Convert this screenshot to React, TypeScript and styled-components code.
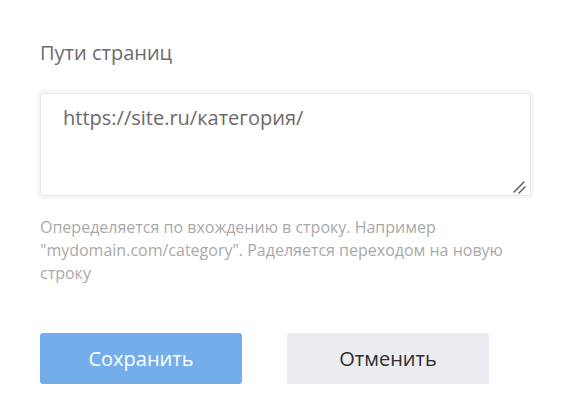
import React, { useEffect, useRef, useState } from "react";
import styled, { createGlobalStyle } from "styled-components";

const GlobalStyle = createGlobalStyle`
    body {
        margin: 0;
        background: #fff;
        font-family: "Open Sans", "Noto Sans", sans-serif;
    }
`;

const StyledForm = styled.div`
    width: 572px;
    height: 410px;
    box-sizing: border-box;
    padding: 40px 41px 0 40px;
    display: flex;
    flex-direction: column;
`;

const Label = styled.div`
    font-size: 20px;
    line-height: 26px;
    color: #6c6c6c;
    margin-bottom: 27px;
`;

const FieldWrap = styled.div`
    position: relative;
    width: 491px;
    & > svg {
        position: absolute;
        right: 5px;
        bottom: 2px;
        pointer-events: none;
    }
`;

const Field = styled.textarea`
    display: block;
    width: 491px;
    height: 103px;
    box-sizing: border-box;
    padding: 11px 22px;
    border: 1px solid #e6e7ea;
    border-radius: 3px;
    box-shadow: 0 0 0 3px #f6f7f9;
    font-family: "Open Sans", "Noto Sans", sans-serif;
    font-size: 20px;
    line-height: 26px;
    color: #6a6a6a;
    caret-color: #444;
    outline: none;
    resize: none;
`;

const Hint = styled.p`
    margin: 20px 0 0;
    width: 480px;
    font-size: 16px;
    line-height: 23px;
    color: #a9a9a9;
`;

const Actions = styled.div`
    display: flex;
    gap: 45px;
    margin-top: 48px;
`;

const Button = styled.button<{ $primary?: boolean }>`
    width: 202px;
    height: 51px;
    border: 0;
    border-radius: 3px;
    font-family: "Open Sans", "Noto Sans", sans-serif;
    font-size: 20px;
    cursor: pointer;
    background: ${(p) => (p.$primary ? "#73aeea" : "#ebecf0")};
    color: ${(p) => (p.$primary ? "#fff" : "#2e2e2e")};
`;

const App = () => {
    const [value, setValue] = useState("https://site.ru/категория/");
    const fieldRef = useRef<HTMLTextAreaElement>(null);

    useEffect(() => {
        const el = fieldRef.current;
        if (el) {
            el.focus();
            el.setSelectionRange(el.value.length, el.value.length);
        }
    }, []);

    return (
        <>
            <GlobalStyle />
            <StyledForm>
                <Label>Пути страниц</Label>
                <FieldWrap>
                    <Field
                        ref={fieldRef}
                        value={value}
                        onChange={(e) => setValue(e.target.value)}
                    />
                    <svg width="14" height="14" viewBox="0 0 14 14">
                        <path
                            d="M2 12 L12 2 M7 13 L13 7"
                            stroke="#555"
                            strokeWidth="1.4"
                            strokeLinecap="round"
                        />
                    </svg>
                </FieldWrap>
                <Hint>
                    Опеределяется по вхождению в строку. Например
                    "mydomain.com/category". Раделяется переходом на новую
                    строку
                </Hint>
                <Actions>
                    <Button type="button" $primary>
                        Сохранить
                    </Button>
                    <Button type="button">Отменить</Button>
                </Actions>
            </StyledForm>
        </>
    );
};

export default App;
